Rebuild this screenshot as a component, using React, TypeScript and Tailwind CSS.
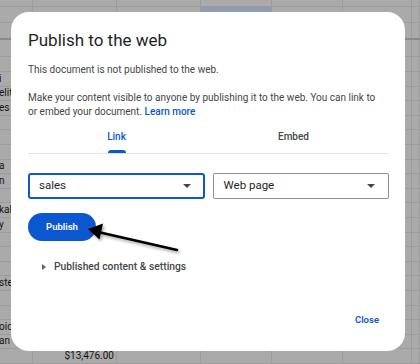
import React from "react";

const colWidths = [33, 84, 84, 71, 71, 69, 8];

type Row = { h: number; label?: string; money?: string; thick?: boolean; hl?: boolean };

const rows: Row[] = [
  { h: 7 },
  { h: 16, hl: true },
  { h: 17, thick: true },
  { h: 17 },
  { h: 15 },
  { h: 14.6, label: "i" },
  { h: 14.6, label: "elit" },
  { h: 14.6, label: "es" },
  { h: 14.6 },
  { h: 14.6 },
  { h: 14.6 },
  { h: 14.6, label: "a" },
  { h: 14.6, label: "n" },
  { h: 14.6 },
  { h: 14.6, label: "kal" },
  { h: 14.6, label: "y" },
  { h: 14.6 },
  { h: 14.6 },
  { h: 14.6 },
  { h: 14.6, label: "ste" },
  { h: 14.6 },
  { h: 14.6 },
  { h: 14.6, label: "oid" },
  { h: 14.6, label: "an" },
  { h: 14.6, money: "$13,476.00" },
];

function Sheet() {
  return (
    <div className="flex flex-col">
      {rows.map((r, i) => (
        <div
          key={i}
          className={
            "flex shrink-0 " +
            (r.thick ? "border-b-2 border-[#8a8a8a]" : "border-b border-[#9c9c9c]")
          }
          style={{ height: r.h }}
        >
          {colWidths.map((w, j) => (
            <div
              key={j}
              className={
                "shrink-0 border-r border-[#9c9c9c] overflow-hidden flex items-center text-[10px] leading-none text-[#151515] " +
                (r.hl && j === 3 ? "bg-[#8f9bb0]" : "")
              }
              style={{ width: w }}
            >
              {j === 0 && r.label ? <span className="-ml-[1px]">{r.label}</span> : null}
              {j === 1 && r.money ? <span className="ml-auto pr-[2px]">{r.money}</span> : null}
            </div>
          ))}
        </div>
      ))}
    </div>
  );
}

function Caret() {
  return (
    <svg width="8" height="4" viewBox="0 0 8 4" className="shrink-0">
      <polygon points="0,0 8,0 4,4" fill="#444746" />
    </svg>
  );
}

export default function App() {
  return (
    <div
      className="relative w-[420px] h-[364px] overflow-hidden bg-[#aaaaaa]"
      style={{ fontFamily: "Roboto, 'Liberation Sans', Arial, sans-serif" }}
    >
      <Sheet />

      <div className="absolute left-[11px] top-[12px] w-[394px] h-[339px] rounded-[18px] bg-white pl-[17px] pr-[16px] pt-[16px] flex flex-col">
        <h1 className="text-[17px] leading-[24px] text-[#1f1f1f] font-normal">Publish to the web</h1>
        <p className="mt-[11px] text-[10px] leading-[14px] text-[#444746]">
          This document is not published to the web.
        </p>
        <p className="mt-[14px] mr-[10px] text-[10px] leading-[14px] text-[#444746]">
          Make your content visible to anyone by publishing it to the web. You can link to or embed your
          document. <span className="text-[#0b57d0] font-medium">Learn more</span>
        </p>

        <div className="mt-[3px] border-b border-[#e3e3e3]">
          <div className="grid grid-cols-2 mr-[7px]">
            <div className="flex flex-col items-center h-[31px] pt-[8px] justify-between">
              <span className="text-[10px] leading-[14px] font-medium text-[#0b57d0]">Link</span>
              <div className="w-[18px] h-[3px] rounded-t-[3px] bg-[#0b57d0]" />
            </div>
            <div className="flex flex-col items-center h-[31px] pt-[8px]">
              <span className="text-[10px] leading-[14px] font-medium text-[#444746]">Embed</span>
            </div>
          </div>
        </div>

        <div className="mt-[19px] grid grid-cols-2 gap-2">
          <div className="h-[26px] rounded-[3px] border-2 border-[#0b57d0] flex items-center pl-[9px] pr-[12px]">
            <span className="flex-1 text-[11.5px] text-[#1f1f1f]">sales</span>
            <Caret />
          </div>
          <div className="h-[26px] rounded-[2px] border border-[#8e918f] flex items-center pl-[10px] pr-[13px]">
            <span className="flex-1 text-[11.5px] text-[#1f1f1f]">Web page</span>
            <Caret />
          </div>
        </div>

        <div className="mt-[14px]">
          <button className="w-[68px] h-[28px] rounded-full bg-[#0b57d0] text-white text-[9.5px] font-semibold flex items-center justify-center">
            Publish
          </button>
        </div>

        <div className="mt-[19px] flex items-center pl-[14px] h-[14px]">
          <svg width="4" height="6" viewBox="0 0 4 6" className="shrink-0">
            <polygon points="0,0 4,3 0,6" fill="#5f6368" />
          </svg>
          <span className="ml-[8px] text-[10.3px] leading-[14px] font-medium text-[#444746]">
            Published content &amp; settings
          </span>
        </div>

        <div className="mt-[39px] flex justify-end pr-[10px]">
          <span className="text-[9.5px] leading-[14px] font-semibold text-[#0b57d0]">Close</span>
        </div>
      </div>

      <svg
        className="absolute left-0 top-0 pointer-events-none"
        width="420"
        height="364"
        viewBox="0 0 420 364"
      >
        <defs>
          <filter id="sh" x="-20%" y="-50%" width="140%" height="200%">
            <feDropShadow dx="1.5" dy="2" stdDeviation="1.5" floodColor="#000" floodOpacity="0.35" />
          </filter>
        </defs>
        <g filter="url(#sh)">
          <line x1="177" y1="250" x2="98" y2="232" stroke="#000" strokeWidth="2.6" strokeLinecap="round" />
          <polygon points="88,229 103,223.5 99.5,239.5" fill="#000" />
        </g>
      </svg>
    </div>
  );
}
